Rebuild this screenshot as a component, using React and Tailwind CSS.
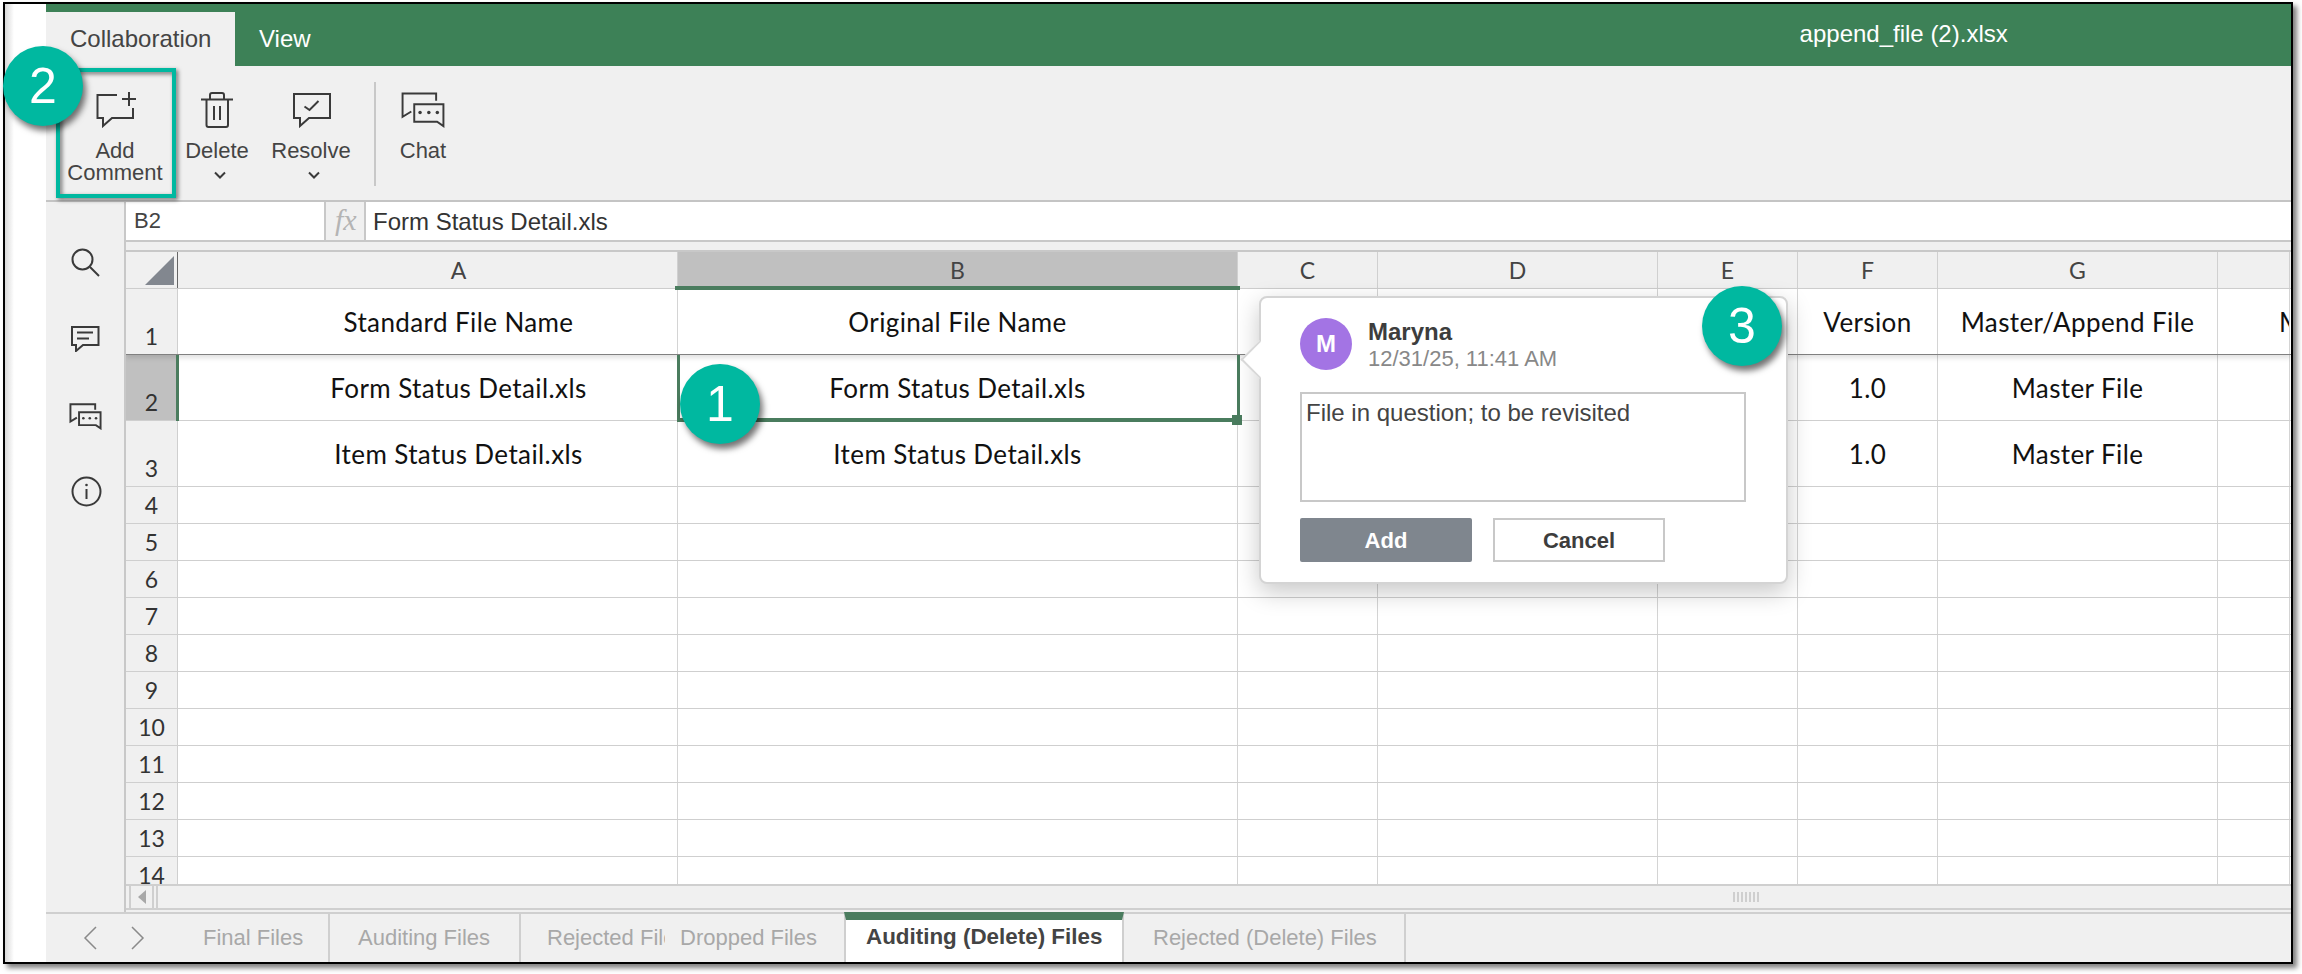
const SANS = "font-['Liberation_Sans',Arial,sans-serif]";

function AddCommentIcon() {
  return (
    <svg width="40" height="36" viewBox="0 0 40 36" fill="none" stroke="#3a3a3a" strokeWidth="2">
      <path d="M21 3H1.5V26H7V34L16 26H37V16" />
      <path d="M33 0V14M26 7H40" />
    </svg>
  );
}

function TrashIcon() {
  return (
    <svg width="32" height="36" viewBox="0 0 32 36" fill="none" stroke="#3a3a3a" strokeWidth="2">
      <path d="M0 7.5H32" />
      <path d="M9 7V3a2 2 0 0 1 2-2h10a2 2 0 0 1 2 2v4" />
      <path d="M5.5 8V33a2 2 0 0 0 2 2H25a2 2 0 0 0 2-2V8" />
      <path d="M13 14V28M19 14V28" />
    </svg>
  );
}

function ResolveIcon() {
  return (
    <svg width="40" height="36" viewBox="0 0 40 36" fill="none" stroke="#3a3a3a" strokeWidth="2">
      <path d="M2 2H38V26H17L8 34V26H2Z" />
      <path d="M12.5 14.5L17.5 18L26.5 9" />
    </svg>
  );
}

function ChatIcon({ width = 46, height = 36, strokeWidth = 2 }) {
  return (
    <svg width={width} height={height} viewBox="0 0 46 37" fill="none" stroke="#3a3a3a" strokeWidth={strokeWidth}>
      <path d="M36.5 9V1.5H2V25.5L11 20" />
      <path d="M14 12.5H44V35L37.5 30.5H14Z" />
      <circle cx="20" cy="21" r="1.8" fill="#3a3a3a" stroke="none" />
      <circle cx="29" cy="21" r="1.8" fill="#3a3a3a" stroke="none" />
      <circle cx="37.7" cy="21" r="1.8" fill="#3a3a3a" stroke="none" />
    </svg>
  );
}

function Chevron() {
  return (
    <svg width="12" height="9" viewBox="0 0 12 9" fill="none" stroke="#3a3a3a" strokeWidth="2">
      <path d="M1 1.5L6 6.5L11 1.5" />
    </svg>
  );
}

function Toolbar() {
  return (
    <div className="flex h-[136px] shrink-0 border-b-2 border-[#c4c4c4] bg-[#f0f0f0] pl-[21px] pt-[26px] text-[22px] leading-[22px] text-[#444]">
      <div className="flex w-[96px] flex-col items-center text-center">
        <div className="ml-[1px] h-[36px]"><AddCommentIcon /></div>
        <div className="mt-[12px]">Add</div>
        <div>Comment</div>
      </div>
      <div className="ml-[14px] flex w-[80px] flex-col items-center">
        <div className="h-[36px]"><TrashIcon /></div>
        <div className="mt-[12px]">Delete</div>
        <div className="ml-[6px] mt-[9px]"><Chevron /></div>
      </div>
      <div className="ml-[9px] flex w-[90px] flex-col items-center">
        <div className="ml-[2px] h-[36px]"><ResolveIcon /></div>
        <div className="mt-[12px]">Resolve</div>
        <div className="ml-[6px] mt-[9px]"><Chevron /></div>
      </div>
      <div className="ml-[18px] mt-[-10px] h-[104px] w-[2px] bg-[#c8c8c8]" />
      <div className="ml-[17px] flex w-[60px] flex-col items-center">
        <div className="h-[36px]"><ChatIcon /></div>
        <div className="mt-[12px]">Chat</div>
      </div>
    </div>
  );
}

function Sidebar() {
  return (
    <div className="flex w-[80px] shrink-0 flex-col items-center border-r-2 border-[#c8c8c8] bg-[#f0f0f0] pt-[46px]">
      <svg width="29" height="29" viewBox="0 0 29 29" fill="none" stroke="#3a3a3a" strokeWidth="2">
        <circle cx="11.5" cy="11.5" r="10" />
        <path d="M19 19L28 28" />
      </svg>
      <svg className="mt-[48px]" width="30" height="27" viewBox="0 0 30 27" fill="none" stroke="#3a3a3a" strokeWidth="2">
        <path d="M2 2H28.5V20H13L6 26V20H2Z" />
        <path d="M7 7.5H23M7 13.5H19" />
      </svg>
      <div className="mt-[51px]"><ChatIcon width={33} height={27} strokeWidth={2.7} /></div>
      <svg className="ml-[2px] mt-[46px]" width="31" height="31" viewBox="0 0 31 31" fill="none" stroke="#3a3a3a" strokeWidth="2">
        <circle cx="15.5" cy="15.5" r="14" />
        <path d="M15.5 13V23" />
        <circle cx="15.5" cy="9" r="1.3" fill="#3a3a3a" stroke="none" />
      </svg>
    </div>
  );
}

function FormulaBar() {
  return (
    <div className="flex h-[40px] shrink-0 border-b-2 border-[#c8c8c8] bg-white">
      <div className="w-[198px] pl-[8px] text-[22px] leading-[38px] text-[#444]">B2</div>
      <div className="w-[42px] border-x-2 border-[#c8c8c8] bg-[#f0f0f0] pl-[9px] font-['Liberation_Serif',serif] text-[30px] italic leading-[36px] text-[#b4b4b4]">fx</div>
      <div className="pl-[7px] text-[24px] leading-[39px] text-[#333]">Form Status Detail.xls</div>
    </div>
  );
}

const COLS = ["A", "B", "C", "D", "E", "F", "G", ""];

const ROWS = [
  { n: 1, h: "h-[66px]", dark: true, cells: ["Standard File Name", "Original File Name", "", "", "", "Version", "Master/Append File", "M"] },
  { n: 2, h: "h-[66px]", active: true, cells: ["Form Status Detail.xls", "Form Status Detail.xls", "", "", "", "1.0", "Master File", ""] },
  { n: 3, h: "h-[66px]", cells: ["Item Status Detail.xls", "Item Status Detail.xls", "", "", "", "1.0", "Master File", ""] },
  ...[4, 5, 6, 7, 8, 9, 10, 11, 12, 13, 14].map((n) => ({ n, h: "h-[37px]", cells: ["", "", "", "", "", "", "", ""] })),
];

const GRID_COLS = "grid grid-cols-[52px_500px_560px_140px_280px_140px_140px_280px_72px]";

function Sheet() {
  return (
    <div className="h-[632px] shrink-0 overflow-hidden bg-white font-['Lato',sans-serif] text-[#111]">
      <div className={`${GRID_COLS} h-[37px] border-b border-[#cfcfcf] bg-[#f0f0f0] text-[23px] leading-[36px] text-[#444]`}>
        <div className="flex items-center justify-end border-r border-[#666] pr-[3px]">
          <svg width="29" height="29" viewBox="0 0 29 29">
            <path d="M29 0V29H0Z" fill="#82878f" />
          </svg>
        </div>
        {COLS.map((c, i) => (
          <div key={i} className={`border-r border-[#d0d0d0] text-center ${c === "B" ? "bg-[#c0c0c0]" : ""} ${i === 0 ? "pl-[62px]" : ""}`}>{c}</div>
        ))}
      </div>
      {ROWS.map((row) => (
        <div
          key={row.n}
          className={`${GRID_COLS} ${row.h} border-b ${row.dark ? "relative z-10 border-[#808080] shadow-[0_3px_5px_rgba(0,0,0,0.12)]" : "border-[#cfcfcf]"}`}
        >
          <div className={`flex items-end justify-center border-r border-[#cfcfcf] text-[23px] leading-[36px] text-[#333] ${row.active ? "bg-[#c0c0c0]" : "bg-[#f0f0f0]"}`}>
            {row.n}
          </div>
          {row.cells.map((text, i) => (
            <div
              key={i}
              className={`flex items-center overflow-hidden whitespace-nowrap border-r border-[#d4d4d4] pt-[2px] text-[26px] tracking-[0.4px] ${i === 7 ? "justify-start pl-[61px]" : "justify-center"} ${i === 0 ? "pl-[62px]" : ""}`}
            >
              {text}
            </div>
          ))}
        </div>
      ))}
    </div>
  );
}

function ScrollBar() {
  return (
    <div className="flex h-[26px] shrink-0 border-y-2 border-[#cfcfcf] bg-[#f0f0f0] pl-[3px]">
      <div className="flex w-[25px] items-center justify-center border-x-2 border-[#cfcfcf]">
        <svg width="8" height="14" viewBox="0 0 8 14"><path d="M8 0V14L0 7Z" fill="#a8a8a8" /></svg>
      </div>
      <div className="ml-[2px] h-full w-[2px] bg-[#cfcfcf]" />
      <div className="ml-[1575px] mt-[6px] flex h-[10px] gap-[2px]">
        {[0, 1, 2, 3, 4, 5, 6].map((i) => (
          <div key={i} className="h-full w-[2px] bg-[#cfcfcf]" />
        ))}
      </div>
    </div>
  );
}

function SheetTabs() {
  return (
    <div className="flex h-[50px] shrink-0 border-t-2 border-[#cfcfcf] bg-[#f0f0f0] text-[22px] leading-[48px] text-[#a8a8a8]">
      <div className="flex w-[134px] shrink-0 items-center pl-[37px]">
        <svg width="15" height="24" viewBox="0 0 15 24" fill="none" stroke="#8a8a8a" strokeWidth="1.5"><path d="M13 1L2 12L13 23" /></svg>
        <svg className="ml-[32px]" width="15" height="24" viewBox="0 0 15 24" fill="none" stroke="#8a8a8a" strokeWidth="1.5"><path d="M2 1L13 12L2 23" /></svg>
      </div>
      <div className="w-[150px] border-r-2 border-[#cfcfcf] pl-[23px]">Final Files</div>
      <div className="w-[191px] border-r-2 border-[#cfcfcf] pl-[28px]">Auditing Files</div>
      <div className="w-[144px] overflow-hidden whitespace-nowrap pl-[26px]">Rejected Files</div>
      <div className="w-[179px] whitespace-nowrap pl-[15px]">Dropped Files</div>
      <div className="mt-[-2px] h-[50px] w-[280px] whitespace-nowrap border-x-2 border-t-8 border-x-[#cfcfcf] border-t-[#4a7c5e] bg-white pl-[20px] text-[22.4px] font-bold leading-[34px] text-[#444]">Auditing (Delete) Files</div>
      <div className="w-[282px] border-r-2 border-[#cfcfcf] pl-[29px]">Rejected (Delete) Files</div>
    </div>
  );
}

function CommentPopover() {
  return (
    <div className="absolute left-[1259px] top-[296px] z-30 h-[288px] w-[529px] rounded-lg border-2 border-[#d4d4d4] bg-white pl-[39px] pt-[20px] shadow-[0_8px_24px_rgba(0,0,0,0.22)]">
      <div className="absolute left-[-15px] top-[48px] h-[27px] w-[27px] rotate-45 border-b-2 border-l-2 border-[#d8d8d8] bg-white" />
      <div className="relative flex">
        <div className="flex size-[52px] items-center justify-center rounded-full bg-[#a374e4] text-[24px] font-bold text-white">M</div>
        <div className="ml-[16px] leading-[27px]">
          <div className="text-[24px] font-bold text-[#3d3d3d]">Maryna</div>
          <div className="text-[22px] text-[#888]">12/31/25, 11:41 AM</div>
        </div>
      </div>
      <div className="mt-[20px] h-[110px] w-[446px] border-2 border-[#c8c8c8] pl-[4px] pt-[5px] text-[24px] leading-[28px] text-[#444]">
        File in question; to be revisited
      </div>
      <div className="mt-[16px] flex gap-[21px] text-[22px] font-bold">
        <div className="flex h-[44px] w-[172px] items-center justify-center rounded-[2px] bg-[#7f868e] text-white">Add</div>
        <div className="flex h-[44px] w-[172px] items-center justify-center border-2 border-[#c8c8c8] bg-white text-[#3d3d3d]">Cancel</div>
      </div>
    </div>
  );
}

function Badge({ pos, children }) {
  return (
    <div className={`absolute z-40 flex size-[80px] items-center justify-center rounded-full bg-[#00b8a0] text-[50px] leading-none text-white shadow-[3px_5px_6px_rgba(0,0,0,0.55)] ${pos}`}>
      {children}
    </div>
  );
}

export default function App() {
  return (
    <div className={`relative h-[974px] w-[2302px] overflow-hidden bg-white pl-[3px] pt-[2px] ${SANS}`}>
      <div className="flex h-[962px] w-[2290px] border-2 border-black bg-white shadow-[4px_4px_5px_rgba(0,0,0,0.5)]">
        <div className="w-[41px] shrink-0">
          <div className="h-full w-[9px] bg-gradient-to-r from-[#d8d8d8] to-white" />
        </div>
        <div className="flex w-[2245px] flex-col">
          <div className="flex h-[62px] shrink-0 items-end bg-[#3d8157] text-[24px] text-white">
            <div className="flex h-[54px] w-[189px] items-center bg-[#f0f0f0] pl-[24px] text-[#444]">Collaboration</div>
            <div className="flex h-[54px] items-center pl-[24px]">View</div>
            <div className="mb-[17px] ml-[1489px] leading-[30px]">append_file (2).xlsx</div>
          </div>
          <Toolbar />
          <div className="flex min-h-0 flex-1">
            <Sidebar />
            <div className="flex min-w-0 flex-1 flex-col">
              <FormulaBar />
              <div className="h-[10px] shrink-0 border-b-2 border-[#c8c8c8] bg-[#f0f0f0]" />
              <Sheet />
              <ScrollBar />
              <div className="h-[2px] shrink-0 bg-[#f0f0f0]" />
            </div>
          </div>
          <SheetTabs />
        </div>
      </div>

      {/* selection around B2 */}
      <div className="absolute left-[675px] top-[286px] z-10 h-[4px] w-[565px] bg-[#4a7c5e]" />
      <div className="absolute left-[176px] top-[355px] z-10 h-[66px] w-[3px] bg-[#4a7c5e]" />
      <div className="absolute left-[677px] top-[355px] z-10 h-[67px] w-[563px] border-x-[3px] border-b-4 border-[#4a7c5e]" />
      <div className="absolute left-[1232px] top-[415px] z-10 size-[10px] bg-[#4a7c5e]" />

      <CommentPopover />

      {/* step callouts */}
      <div className="absolute left-[56px] top-[68px] z-20 h-[130px] w-[120px] border-4 border-[#00b8a0] drop-shadow-[2px_2px_2px_rgba(0,0,0,0.55)]" />
      <Badge pos="left-[680px] top-[364px]">1</Badge>
      <Badge pos="left-[3px] top-[46px]">2</Badge>
      <Badge pos="left-[1702px] top-[286px]">3</Badge>
    </div>
  );
}
